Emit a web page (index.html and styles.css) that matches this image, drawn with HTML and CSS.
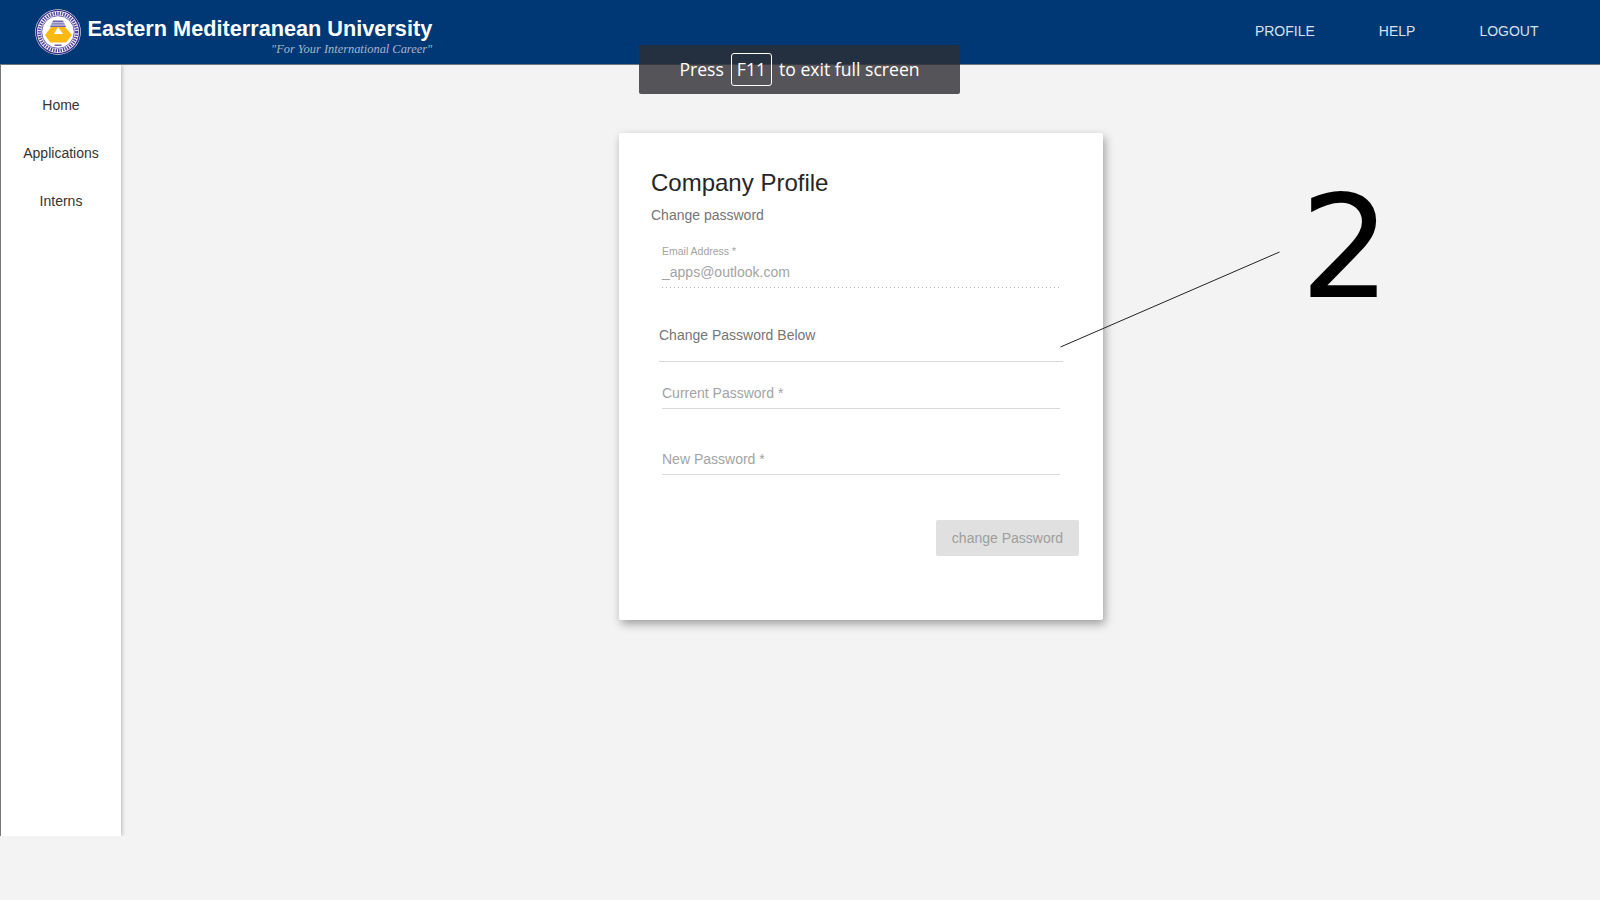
FILE: index.html
```html
<!DOCTYPE html>
<html>
<head>
  <meta charset="UTF-8">
  <title>Company Profile</title>
  <link rel="stylesheet" href="styles.css">
</head>
<body>
  <div class="topbar">
    <div class="brand">
      <svg class="logo" width="46" height="46" viewBox="0 0 46 46">
        <circle cx="23" cy="23" r="22.8" fill="#fff"/>
        <circle cx="23" cy="23" r="21.6" fill="none" stroke="#3a2c8c" stroke-width="1.4"/>
        <circle cx="23" cy="23" r="18.6" fill="none" stroke="#5146a0" stroke-width="3.4" stroke-dasharray="1.500 1"/>
        <circle cx="23" cy="23" r="16.300" fill="none" stroke="#3a2c8c" stroke-width="0.7"/>
        <polygon points="18,11.500 28,11.500 31,18 15,18" fill="#6f68ad"/>
        <path d="M17 13.800H29M16 16H30" stroke="#fff" stroke-width="0.8"/>
        <polygon points="10,26 16,18 30,18 37,26 31,33.500 15,33.500" fill="#fdb913"/>
        <polygon points="23,18 19,25 28,25" fill="#fff"/>
        <rect x="19.500" y="35.500" width="7" height="1.500" fill="#6f6a9c"/>
      </svg>
      <div class="brand-text">
        <div class="brand-name">Eastern Mediterranean University</div>
        <div class="brand-tag">"For Your International Career"</div>
      </div>
    </div>
    <div class="topnav">
      <a href="#">PROFILE</a>
      <a href="#">HELP</a>
      <a href="#">LOGOUT</a>
    </div>
  </div>

  <div class="content">
    <div class="sidebar">
      <a href="#">Home</a>
      <a href="#">Applications</a>
      <a href="#">Interns</a>
    </div>
    <div class="main">
      <div class="card">
        <h2>Company Profile</h2>
        <p class="subtitle">Change password</p>
        <div class="field field-email">
          <label>Email Address *</label>
          <div class="value">_apps@outlook.com</div>
        </div>
        <div class="section-title">Change Password Below</div>
        <div class="field field-pass first">Current Password *</div>
        <div class="field field-pass">New Password *</div>
        <div class="actions">
          <button disabled>change Password</button>
        </div>
      </div>
    </div>
  </div>

  <div class="fullscreen-note">Press <span class="key">F11</span> to exit full screen</div>

  <svg class="callout-line" width="240" height="110" viewBox="0 0 240 110">
    <line x1="0.500" y1="107" x2="219.500" y2="12" stroke="#222" stroke-width="1"/>
  </svg>
  <div class="callout-number">2</div>
</body>
</html>
```

FILE: styles.css
```css
body {
  margin: 0;
  background-color: #f3f3f3;
  font-family: "Liberation Sans", Arial, sans-serif;
  height: 900px;
  overflow: hidden;
}
a {
  text-decoration: none;
}
.topbar {
  height: 64px;
  background-color: #003876;
  border-bottom: 1px solid #6e7681;
  display: flex;
  justify-content: space-between;
  align-items: center;
}
.brand {
  display: flex;
  align-items: center;
  margin-left: 35px;
  gap: 6.500px;
}
.brand-text {
  display: flex;
  flex-direction: column;
  align-items: flex-end;
  padding-top: 8px;
}
.brand-name {
  color: white;
  font-size: 21.700px;
  font-weight: bold;
  line-height: 26px;
}
.brand-tag {
  color: #a9b4c6;
  font-family: "Liberation Serif", serif;
  font-style: italic;
  font-size: 12.400px;
  line-height: 14px;
}
.topnav {
  display: flex;
  gap: 64px;
  margin-right: 61.500px;
  margin-bottom: 3px;
}
.topnav a {
  color: #d7e0ec;
  font-size: 14px;
}
.content {
  display: flex;
}
.sidebar {
  width: 120px;
  height: 755px;
  background-color: white;
  border-left: 1px solid #777;
  box-shadow: 1px 0 4px rgba(0, 0, 0, 0.25);
  clip-path: inset(0 -8px 0 0);
  padding-top: 16px;
}
.sidebar a {
  display: block;
  height: 48px;
  line-height: 48px;
  text-align: center;
  color: #333;
  font-size: 14px;
}
.main {
  flex-grow: 1;
  display: flex;
  justify-content: center;
  padding: 68px 0 0 1px;
}
.card {
  width: 484px;
  height: 487px;
  background-color: white;
  border-radius: 2px;
  box-shadow: 2px 4px 10px rgba(0, 0, 0, 0.35);
  box-sizing: border-box;
  padding: 36px 24px 0 32px;
}
.card h2 {
  margin: 0;
  font-size: 24px;
  font-weight: normal;
  line-height: 28px;
  color: #262626;
}
.subtitle {
  margin: 10px 0 0;
  font-size: 14px;
  line-height: 17px;
  color: #757575;
}
.field {
  margin-left: 11px;
  margin-right: 19px;
  color: #a3a3a3;
  font-size: 14px;
}
.field-email {
  margin-top: 19px;
  height: 45px;
  background-image: linear-gradient(to right, #b5b5b5 1px, transparent 1px);
  background-size: 4px 1px;
  background-repeat: repeat-x;
  background-position: left bottom;
}
.field-email label {
  display: block;
  font-size: 10.500px;
  line-height: 16px;
}
.value {
  margin-top: 1px;
  line-height: 24px;
}
.section-title {
  margin: 37px 16px 0 8px;
  height: 36px;
  font-size: 14px;
  line-height: 20px;
  color: #757575;
  border-bottom: 1px solid #d9d9d9;
}
.field-pass {
  height: 25px;
  line-height: 20px;
  border-bottom: 1px solid #d9d9d9;
  margin-top: 40px;
}
.field-pass.first {
  margin-top: 21px;
}
.actions {
  display: flex;
  justify-content: flex-end;
  margin-top: 45px;
}
button {
  height: 36px;
  width: 143px;
  border: 0;
  border-radius: 2px;
  background-color: #e0e0e0;
  color: #9e9e9e;
  font-family: inherit;
  font-size: 14px;
}
.fullscreen-note {
  position: absolute;
  left: 639px;
  top: 45px;
  width: 321px;
  height: 47px;
  padding-bottom: 2px;
  border-radius: 2px;
  background-color: rgba(45, 45, 50, 0.8);
  color: white;
  font-family: "Open Sans", "Noto Sans", sans-serif;
  font-size: 17.600px;
  display: flex;
  align-items: center;
  justify-content: center;
  gap: 7px;
}
.key {
  border: 1px solid white;
  border-radius: 3px;
  margin-top: 2px;
  padding: 0 5px;
  height: 31px;
  line-height: 31px;
}
.callout-line {
  position: absolute;
  left: 1060px;
  top: 240px;
}
.callout-number {
  position: absolute;
  left: 1300px;
  top: 166px;
  font-family: "DejaVu Sans", sans-serif;
  font-size: 143px;
  line-height: 163px;
  color: black;
}
```
